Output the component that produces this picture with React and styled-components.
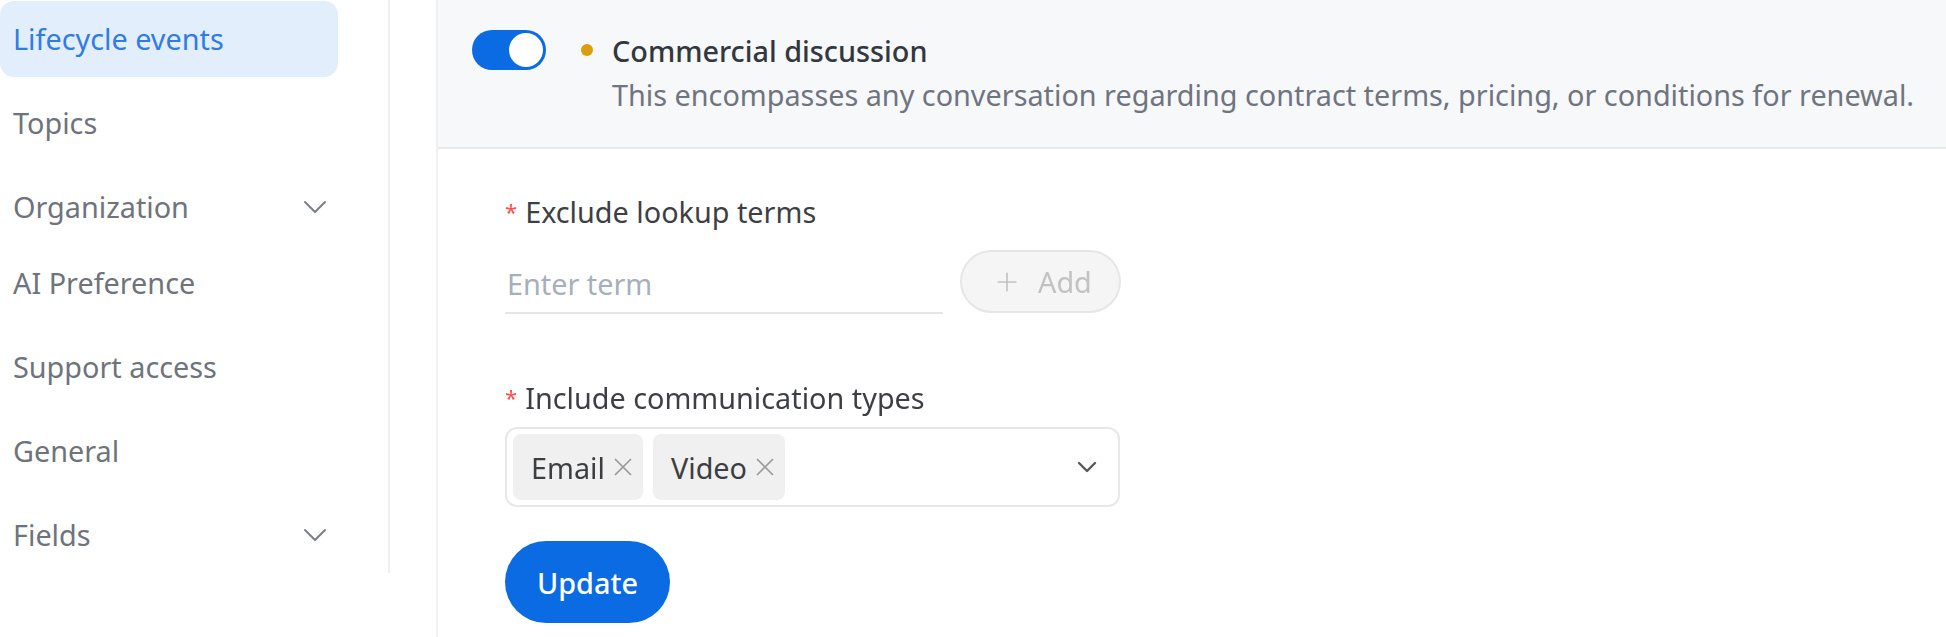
import styled, { createGlobalStyle } from 'styled-components';
import { Plus, X } from 'lucide-react';

const GlobalStyle = createGlobalStyle`
    html, body {
        margin: 0;
        padding: 0;
        background: #fff;
        overflow: hidden;
    }
    body {
        font-family: "Noto Sans", "Open Sans", sans-serif;
        font-size: 28.8px;
        color: #3b3f48;
    }
    * {
        box-sizing: border-box;
    }
`;

const Page = styled.div`
    display: flex;
    align-items: flex-start;
    height: 637px;
`;

const Sidebar = styled.nav`
    flex-shrink: 0;
    width: 390px;
    height: 573px;
    padding: 1px 50px 0 0;
    border-right: 2px solid #efefef;
`;

const MenuItem = styled.div`
    display: flex;
    align-items: center;
    justify-content: space-between;
    height: 76px;
    padding: 0 11px 0 13px;
    margin-bottom: ${props => (props.$flush ? 0 : 8)}px;
    border-radius: 14px;
    background: ${props => (props.$active ? '#e3eefd' : 'transparent')};
    color: ${props => (props.$active ? '#2f7ce3' : '#6e737c')};
    line-height: 1;
`;

const Chevron = styled.svg`
    display: block;
    fill: none;
    stroke: ${props => props.$color || '#7a7f88'};
    stroke-width: ${props => props.$stroke || 2};
    stroke-linecap: round;
    stroke-linejoin: round;
`;

const Panel = styled.section`
    flex: 1;
    height: 100%;
    margin-left: 46px;
    border-left: 2px solid #f0f1f3;
`;

const Header = styled.header`
    display: grid;
    grid-template-columns: 74px 66px 1fr;
    grid-template-rows: 44px 44px;
    align-items: center;
    padding: 28px 34px 31px;
    background: #f7f8fa;
    border-bottom: 2px solid #e8e9eb;
`;

const Toggle = styled.button`
    position: relative;
    width: 74px;
    height: 40px;
    padding: 0;
    border: none;
    border-radius: 20px;
    background: #0b6be3;
    cursor: pointer;

    &::after {
        content: '';
        position: absolute;
        top: 3px;
        right: 3px;
        width: 34px;
        height: 34px;
        border-radius: 50%;
        background: #fff;
    }
`;

const Dot = styled.span`
    justify-self: end;
    width: 12px;
    height: 12px;
    margin-right: 19px;
    border-radius: 50%;
    background: #d99e0b;
`;

const Title = styled.div`
    font-weight: 500;
    color: #33373f;
`;

const Description = styled.div`
    grid-column: 3;
    color: #6f7480;
    white-space: nowrap;
`;

const Form = styled.div`
    padding: 40px 0 0 67px;
`;

const FormItem = styled.div`
    margin-top: ${props => props.$top || 0}px;
`;

const Label = styled.div`
    display: flex;
    align-items: center;
    height: 44px;
    margin-bottom: ${props => props.$gap || 8}px;
    color: #3d3f44;
`;

const Required = styled.span`
    margin-right: 8px;
    color: #ff4d4f;
    font-size: 22px;
`;

const InputRow = styled.div`
    display: flex;
    align-items: flex-end;
    gap: 17px;
`;

const TermInput = styled.input`
    width: 438px;
    height: 72px;
    padding: 12px 0 0 2px;
    border: none;
    border-bottom: 2px solid #e4e5e8;
    outline: none;
    background: transparent;
    font: inherit;
    color: #3b3f48;
    caret-color: #3b3f48;

    &::placeholder {
        color: #a7aebc;
    }
`;

const AddButton = styled.button`
    display: flex;
    align-items: center;
    gap: 16px;
    height: 63px;
    width: 161px;
    margin-bottom: 1px;
    padding: 0 0 0 30px;
    border: 2px solid #e6e6e6;
    border-radius: 32px;
    background: #f5f5f5;
    color: #c2c2c2;
    font: inherit;
`;

const Select = styled.div`
    display: flex;
    align-items: center;
    gap: 10px;
    width: 615px;
    height: 80px;
    padding: 0 21px 0 6px;
    border: 2px solid #e8e8e8;
    border-radius: 12px;
`;

const Tag = styled.span`
    display: flex;
    align-items: center;
    gap: 3px;
    height: 66px;
    padding: 0 5px 0 18px;
    border-radius: 8px;
    background: #f0f0f0;
    color: #3c3e42;
`;

const Spacer = styled.span`
    flex: 1;
`;

const UpdateButton = styled.button`
    width: 165px;
    height: 82px;
    margin-top: 34px;
    border: none;
    border-radius: 41px;
    background: #0b6be3;
    color: #fff;
    font: inherit;
    font-weight: 500;
    cursor: pointer;
`;

const menu = [
    { label: 'Lifecycle events', active: true },
    { label: 'Topics' },
    { label: 'Organization', sub: true },
    { label: 'AI Preference' },
    { label: 'Support access' },
    { label: 'General' },
    { label: 'Fields', sub: true },
];

const DownArrow = ({ width = 24, height = 14, color, stroke }) => (
    <Chevron width={width} height={height} viewBox={`0 0 ${width} ${height}`} $color={color} $stroke={stroke}>
        <polyline points={`2,2 ${width / 2},${height - 2} ${width - 2},2`} />
    </Chevron>
);

const App = () => {
    return (
        <>
            <GlobalStyle />
            <Page>
                <Sidebar>
                    {menu.map(item => (
                        <MenuItem key={item.label} $active={item.active} $flush={item.label === 'Organization'}>
                            {item.label}
                            {item.sub && <DownArrow />}
                        </MenuItem>
                    ))}
                </Sidebar>
                <Panel>
                    <Header>
                        <Toggle aria-label="enabled" />
                        <Dot />
                        <Title>Commercial discussion</Title>
                        <Description>
                            This encompasses any conversation regarding contract terms, pricing, or conditions for
                            renewal.
                        </Description>
                    </Header>
                    <Form>
                        <FormItem>
                            <Label $gap={9}>
                                <Required>*</Required>Exclude lookup terms
                            </Label>
                            <InputRow>
                                <TermInput placeholder="Enter term" autoFocus />
                                <AddButton disabled>
                                    <Plus size={30} strokeWidth={1.3} />
                                    Add
                                </AddButton>
                            </InputRow>
                        </FormItem>
                        <FormItem $top={61}>
                            <Label>
                                <Required>*</Required>Include communication types
                            </Label>
                            <Select>
                                <Tag>
                                    Email
                                    <X size={30} strokeWidth={1.4} color="#9a9a9a" />
                                </Tag>
                                <Tag>
                                    Video
                                    <X size={30} strokeWidth={1.4} color="#9a9a9a" />
                                </Tag>
                                <Spacer />
                                <DownArrow width={20} height={12} color="#55585e" stroke={2.4} />
                            </Select>
                        </FormItem>
                        <UpdateButton>Update</UpdateButton>
                    </Form>
                </Panel>
            </Page>
        </>
    );
};

export default App;
